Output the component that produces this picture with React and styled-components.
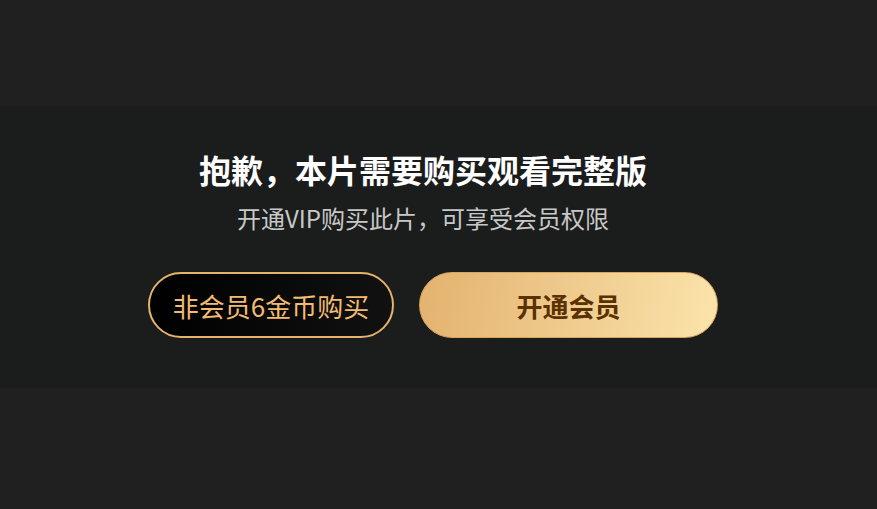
import React from 'react';
import styled, { createGlobalStyle } from 'styled-components';

const GlobalStyle = createGlobalStyle`
  html, body {
    margin: 0;
    padding: 0;
    background: #202020;
  }
  body {
    font-family: "Noto Sans CJK SC", "Noto Sans", sans-serif;
  }
`;

const Page = styled.div`
  width: 877px;
  height: 509px;
  padding-top: 106px;
  box-sizing: border-box;
  background: #202020;
`;

const Panel = styled.section`
  height: 282px;
  background: #1b1c1c;
  display: flex;
  flex-direction: column;
  align-items: center;
  padding-top: 41px;
  box-sizing: border-box;
`;

const Title = styled.h2`
  margin: 0 31px 0 0;
  font-size: 32px;
  line-height: 44px;
  font-weight: 700;
  color: #ffffff;
`;

const Subtitle = styled.p`
  margin: 11px 31px 0 0;
  font-size: 24px;
  line-height: 32px;
  color: #c8c8c8;
`;

const Actions = styled.div`
  display: flex;
  gap: 25px;
  margin-top: 38px;
  margin-right: 11px;
`;

const PillButton = styled.button`
  height: 66px;
  width: ${({ $width }) => $width}px;
  border-radius: 33px;
  font-family: inherit;
  font-size: 26px;
  cursor: pointer;
  box-sizing: border-box;
  display: flex;
  align-items: center;
  justify-content: center;
  padding: 0;
`;

const CoinButton = styled(PillButton)`
  background: linear-gradient(90deg, #000000 0%, #111111 100%);
  border: 2px solid #e6b36c;
  color: #f2bb72;
  font-weight: 400;
`;

const VipButton = styled(PillButton)`
  background: linear-gradient(100deg, #e3b26f 0%, #f0cd90 55%, #fbe4ab 100%);
  border: 1px solid #d9a45c;
  color: #5a3100;
  font-weight: 700;
`;

export default function App() {
  return (
    <>
      <GlobalStyle />
      <Page>
        <Panel>
          <Title>抱歉，本片需要购买观看完整版</Title>
          <Subtitle>开通VIP购买此片，可享受会员权限</Subtitle>
          <Actions>
            <CoinButton $width={246}>非会员6金币购买</CoinButton>
            <VipButton $width={299}>开通会员</VipButton>
          </Actions>
        </Panel>
      </Page>
    </>
  );
}
